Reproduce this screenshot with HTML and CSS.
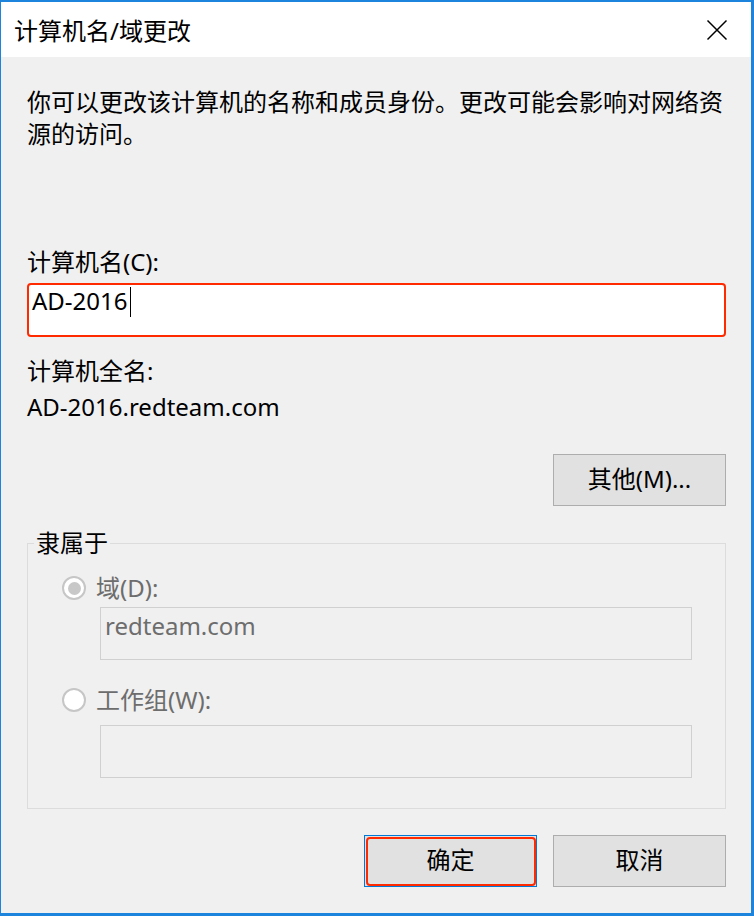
FILE: index.html
```html
<!DOCTYPE html>
<html lang="zh-CN">
<head>
<meta charset="utf-8">
<title>计算机名/域更改</title>
<link rel="stylesheet" href="styles.css">
</head>
<body>
<div class="window">
  <div class="titlebar">
    <span class="title">计算机名/域更改</span>
    <svg class="close" width="22" height="22" viewBox="0 0 22 22" aria-hidden="true">
      <path d="M1.5 1.5 L20.5 20.5 M20.5 1.5 L1.5 20.5" stroke="#000" stroke-width="1.5" fill="none"/>
    </svg>
  </div>
  <div class="content">
    <p class="intro">你可以更改该计算机的名称和成员身份。更改可能会影响对网络资源的访问。</p>
    <div class="label label-name">计算机名(C):</div>
    <div class="name-input">AD-2016<span class="caret"></span></div>
    <div class="label label-full">计算机全名:</div>
    <div class="label">AD-2016.redteam.com</div>
    <div class="more-row">
      <div class="btn">其他(M)...</div>
    </div>
    <div class="group">
      <div class="legend">隶属于</div>
      <div class="radio-row first">
        <span class="radio checked"></span>
        <span class="radio-label">域(D):</span>
      </div>
      <div class="field field-domain">redteam.com</div>
      <div class="radio-row second">
        <span class="radio"></span>
        <span class="radio-label">工作组(W):</span>
      </div>
      <div class="field field-work"></div>
    </div>
    <div class="actions">
      <div class="btn btn-ok">确定</div>
      <div class="btn">取消</div>
    </div>
  </div>
</div>
</body>
</html>
```

FILE: styles.css
```css
* { box-sizing: border-box; }

html, body {
  margin: 0;
  padding: 0;
  background: #f0f0f0;
}

body {
  font-family: "Noto Sans", "Noto Sans CJK SC", sans-serif;
  font-size: 24px;
  line-height: 32px;
  color: #000;
}

.window {
  width: 754px;
  height: 916px;
  border-style: solid;
  border-color: #1c84dc;
  border-width: 2px 3px 3px 1px;
  background: #f0f0f0;
  display: flex;
  flex-direction: column;
}

.titlebar {
  height: 55px;
  background: #fff;
  display: flex;
  align-items: center;
  justify-content: space-between;
  padding: 2px 23px 0 13px;
  flex: none;
}

.title {
  font-family: "Noto Sans", "Noto Sans CJK SC", sans-serif;
  font-size: 24px;
  line-height: 32px;
}

.close { display: block; margin-top: -2px; }

.content {
  padding: 29px 25px 0 26px;
  display: flex;
  flex-direction: column;
}

.intro {
  margin: 0;
  padding-right: 2px;
}

.label { white-space: nowrap; }
.label-name { margin-top: 96px; }

.name-input {
  margin-top: 5px;
  height: 54px;
  background: #fff;
  border: 2px solid #ff2a00;
  border-radius: 4px;
  padding: 0 0 0 3px;
  line-height: 32px;
  display: flex;
  align-items: flex-start;
}

.caret {
  display: inline-block;
  width: 1px;
  height: 30px;
  background: #000;
  margin: 2px 0 0 2px;
}

.label-full { margin-top: 18px; margin-bottom: 4px; }

.more-row {
  margin-top: 31px;
  display: flex;
  justify-content: flex-end;
}

.btn {
  width: 173px;
  height: 52px;
  background: #e1e1e1;
  border: 1px solid #adadad;
  display: flex;
  align-items: center;
  justify-content: center;
  padding-bottom: 2px;
}

.group {
  margin-top: 37px;
  height: 266px;
  border: 1px solid #dcdcdc;
  display: flex;
  flex-direction: column;
}

.legend {
  align-self: flex-start;
  margin: -17px 0 0 6px;
  padding: 0 2px;
  background: #f0f0f0;
}

.radio-row {
  display: flex;
  align-items: center;
  height: 32px;
  padding-left: 34px;
  color: #6d6d6d;
}
.radio-row.first { margin-top: 13px; }
.radio-row.second { margin-top: 24px; }

.radio {
  width: 24px;
  height: 24px;
  border-radius: 50%;
  border: 2px solid #c6c6c6;
  background: #fff;
  margin-right: 10px;
  display: flex;
  align-items: center;
  justify-content: center;
  flex: none;
}
.radio.checked::before {
  content: "";
  width: 13px;
  height: 13px;
  border-radius: 50%;
  background: #c8c8c8;
}

.radio-label { line-height: 32px; }

.field {
  margin-left: 72px;
  width: 592px;
  height: 53px;
  border: 1px solid #d0d0d0;
  background: #f0f0f0;
  color: #6d6d6d;
  padding: 2px 0 0 4px;
}
.field-domain { margin-top: 3px; }
.field-work { margin-top: 9px; }

.actions {
  margin-top: 26px;
  display: flex;
  justify-content: flex-end;
  gap: 16px;
}

.btn-ok {
  position: relative;
  border-color: #0078d7;
}
.btn-ok::after {
  content: "";
  position: absolute;
  inset: 1px 0 0 1px;
  border: 2px solid #ff2a00;
  border-radius: 4px;
}
```
